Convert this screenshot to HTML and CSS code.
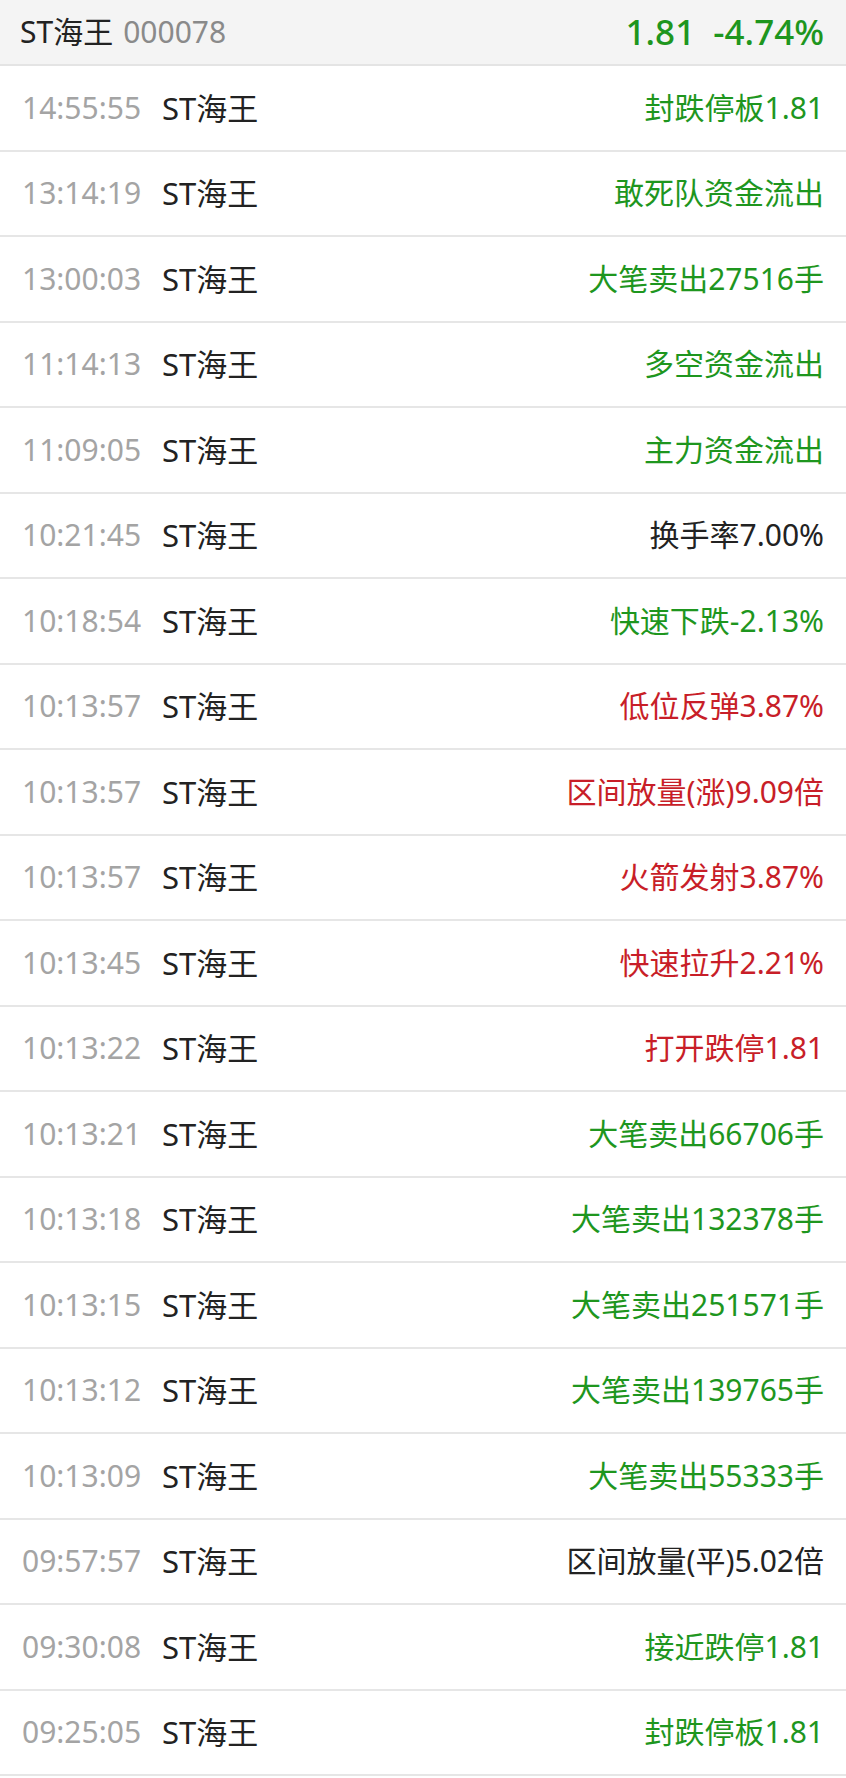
FILE: index.html
```html
<!DOCTYPE html>
<html lang="zh-CN">
<head>
    <meta charset="UTF-8">
    <meta name="viewport" content="width=device-width, initial-scale=1.0">
    <title>ST海王 000078</title>
    <link rel="stylesheet" href="styles.css">
</head>
<body>
    <div class="head">
        <span class="stock">ST海王</span>
        <span class="code">000078</span>
        <span class="quote down">1.81&nbsp;&nbsp;-4.74%</span>
    </div>
    <ul class="list">
        <li><span class="time">14:55:55</span><span class="name">ST海王</span><span class="msg down">封跌停板1.81</span></li>
        <li><span class="time">13:14:19</span><span class="name">ST海王</span><span class="msg down">敢死队资金流出</span></li>
        <li><span class="time">13:00:03</span><span class="name">ST海王</span><span class="msg down">大笔卖出27516手</span></li>
        <li><span class="time">11:14:13</span><span class="name">ST海王</span><span class="msg down">多空资金流出</span></li>
        <li><span class="time">11:09:05</span><span class="name">ST海王</span><span class="msg down">主力资金流出</span></li>
        <li><span class="time">10:21:45</span><span class="name">ST海王</span><span class="msg">换手率7.00%</span></li>
        <li><span class="time">10:18:54</span><span class="name">ST海王</span><span class="msg down">快速下跌-2.13%</span></li>
        <li><span class="time">10:13:57</span><span class="name">ST海王</span><span class="msg up">低位反弹3.87%</span></li>
        <li><span class="time">10:13:57</span><span class="name">ST海王</span><span class="msg up">区间放量(涨)9.09倍</span></li>
        <li><span class="time">10:13:57</span><span class="name">ST海王</span><span class="msg up">火箭发射3.87%</span></li>
        <li><span class="time">10:13:45</span><span class="name">ST海王</span><span class="msg up">快速拉升2.21%</span></li>
        <li><span class="time">10:13:22</span><span class="name">ST海王</span><span class="msg up">打开跌停1.81</span></li>
        <li><span class="time">10:13:21</span><span class="name">ST海王</span><span class="msg down">大笔卖出66706手</span></li>
        <li><span class="time">10:13:18</span><span class="name">ST海王</span><span class="msg down">大笔卖出132378手</span></li>
        <li><span class="time">10:13:15</span><span class="name">ST海王</span><span class="msg down">大笔卖出251571手</span></li>
        <li><span class="time">10:13:12</span><span class="name">ST海王</span><span class="msg down">大笔卖出139765手</span></li>
        <li><span class="time">10:13:09</span><span class="name">ST海王</span><span class="msg down">大笔卖出55333手</span></li>
        <li><span class="time">09:57:57</span><span class="name">ST海王</span><span class="msg">区间放量(平)5.02倍</span></li>
        <li><span class="time">09:30:08</span><span class="name">ST海王</span><span class="msg down">接近跌停1.81</span></li>
        <li><span class="time">09:25:05</span><span class="name">ST海王</span><span class="msg down">封跌停板1.81</span></li>
    </ul>
</body>
</html>
```

FILE: styles.css
```css
body { margin: 0; background: #fff; font-family: "Noto Sans", "Noto Sans CJK SC", sans-serif; color: #222; }
.head { display: flex; align-items: center; height: 66px; box-sizing: border-box; padding: 0 22px 0 20px; background: #f4f4f4; border-bottom: 2px solid #e4e4e4; line-height: 40px; }
.stock { font-size: 30px; color: #222; }
.code { font-size: 30px; color: #8a8a8a; margin-left: 10px; }
.quote { margin-left: auto; font-size: 35px; font-weight: 500; }
.list { list-style: none; margin: 0; padding: 0; }
.list li { display: flex; align-items: center; height: 85.5px; box-sizing: border-box; padding: 0 22px; border-bottom: 2px solid #e6e6e6; font-size: 30px; line-height: 40px; }
.time { color: #a4a4a4; width: 140px; }
.name { color: #222; font-size: 31px; }
.msg { margin-left: auto; color: #222; }
.down { color: #1e961e; }
.up { color: #c81e28; }
```
